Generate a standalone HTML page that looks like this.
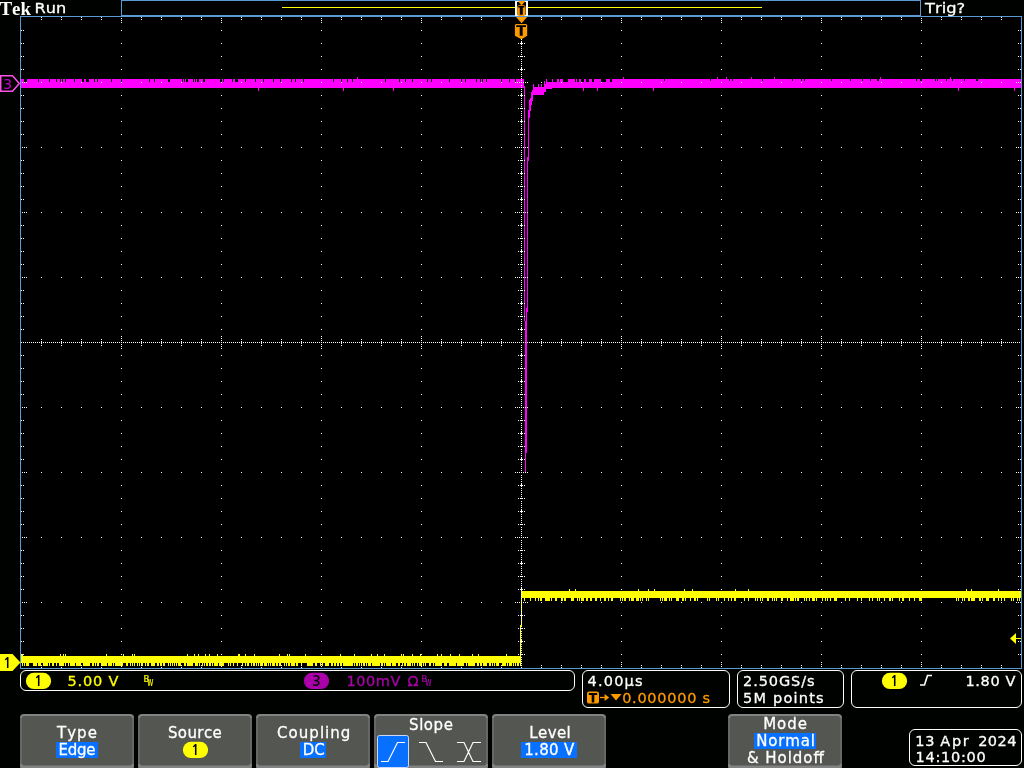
<!DOCTYPE html>
<html lang="en"><head><meta charset="utf-8"><title>Tek scope</title>
<style>html,body{margin:0;padding:0;background:#000200;overflow:hidden}svg{display:block;position:absolute;left:0;top:0;will-change:transform}text{font-family:"DejaVu Sans","Liberation Sans",sans-serif;font-size:15px;font-kerning:none;color:#fff;fill:currentColor;stroke:currentColor;stroke-width:0.3px}.r{font-size:14.5px}.b{font-family:"NanumGothic","Liberation Sans",sans-serif;font-weight:bold;font-size:14.5px;stroke-width:0}.tek{font-family:"Liberation Serif","DejaVu Serif",serif;font-weight:bold;font-size:19px;stroke-width:0}.t{font-size:14.5px}.y{color:#ffff00}.m{color:#aa00aa}.o{color:#ff9900}.k{color:#000}.c{text-anchor:middle}</style></head><body>
<svg width="1024" height="768" viewBox="0 0 1024 768">
<rect width="1024" height="768" fill="#000200"/>
<rect x="21" y="17" width="1000" height="651" fill="#000"/>
<path d="M21 79h3v9h-3zM24 82h3v6h-3zM27 79h11v9h-11zM38 82h1v6h-1zM39 79h10v9h-10zM49 82h1v6h-1zM50 79h6v9h-6zM56 82h1v6h-1zM57 79h3v9h-3zM60 82h1v6h-1zM61 79h1v9h-1zM62 82h1v6h-1zM63 79h2v9h-2zM65 82h1v6h-1zM66 79h8v9h-8zM74 82h1v6h-1zM75 79h7v9h-7zM82 82h2v6h-2zM84 79h2v9h-2zM86 82h3v6h-3zM89 79h5v9h-5zM94 82h1v6h-1zM95 79h2v9h-2zM97 82h1v6h-1zM98 79h13v9h-13zM111 82h1v6h-1zM112 79h9v9h-9zM121 82h1v6h-1zM122 79h27v9h-27zM149 82h1v6h-1zM150 79h4v9h-4zM154 82h1v6h-1zM155 79h13v9h-13zM168 82h2v6h-2zM170 79h12v9h-12zM182 82h1v6h-1zM183 79h1v9h-1zM184 82h1v6h-1zM185 79h1v9h-1zM186 82h2v6h-2zM188 79h5v9h-5zM193 82h1v6h-1zM194 79h1v9h-1zM195 82h1v6h-1zM196 79h1v9h-1zM197 82h2v6h-2zM199 79h4v9h-4zM203 82h2v6h-2zM205 79h15v9h-15zM220 82h2v6h-2zM222 79h1v9h-1zM223 82h1v6h-1zM224 79h8v9h-8zM232 82h1v6h-1zM233 79h2v9h-2zM235 82h3v6h-3zM238 79h7v9h-7zM245 82h1v6h-1zM246 79h9v9h-9zM255 82h1v6h-1zM256 79h2v9h-2zM258 79h1v12h-1zM259 79h4v9h-4zM263 82h1v6h-1zM264 79h9v9h-9zM273 82h1v6h-1zM274 79h6v9h-6zM280 82h1v6h-1zM281 79h10v9h-10zM291 82h1v6h-1zM292 79h3v9h-3zM295 82h1v6h-1zM296 79h7v9h-7zM303 82h1v6h-1zM304 79h29v9h-29zM333 82h1v6h-1zM334 79h7v9h-7zM341 82h1v6h-1zM342 79h1v9h-1zM343 79h1v12h-1zM344 79h3v9h-3zM347 82h1v6h-1zM348 79h4v9h-4zM352 82h1v6h-1zM353 79h4v9h-4zM357 77h1v11h-1zM358 79h27v9h-27zM385 82h1v6h-1zM386 79h7v9h-7zM393 79h1v12h-1zM394 79h5v9h-5zM399 82h1v6h-1zM400 79h5v9h-5zM405 82h1v6h-1zM406 79h6v9h-6zM412 82h1v6h-1zM413 79h14v9h-14zM427 82h1v6h-1zM428 79h3v9h-3zM431 82h1v6h-1zM432 79h17v9h-17zM449 82h1v6h-1zM450 79h11v9h-11zM461 82h1v6h-1zM462 79h3v9h-3zM465 82h1v6h-1zM466 79h10v9h-10zM476 82h1v6h-1zM477 79h3v9h-3zM480 82h1v6h-1zM481 79h1v9h-1zM482 82h1v6h-1zM483 79h3v9h-3zM486 82h1v6h-1zM487 79h14v9h-14zM501 82h1v6h-1zM502 79h7v9h-7zM509 82h1v6h-1zM510 79h5v9h-5zM515 82h1v6h-1zM516 79h8v9h-8zM524 86h1v235h-1zM525 321h1v152h-1zM526 308h1v145h-1zM527 157h1v155h-1zM528 110h1v51h-1zM529 100h1v18h-1zM530 98h1v13h-1zM531 92h1v13h-1zM532 90h1v11h-1zM533 84h1v11h-1zM534 87h4v8h-4zM538 84h1v11h-1zM539 87h2v8h-2zM541 84h1v11h-1zM542 87h2v8h-2zM544 81h1v11h-1zM545 84h1v8h-1zM546 79h1v10h-1zM547 82h5v7h-5zM552 79h1v9h-1zM553 82h4v6h-4zM557 79h2v9h-2zM559 82h1v6h-1zM560 79h3v9h-3zM563 82h5v6h-5zM568 79h7v9h-7zM575 82h1v6h-1zM576 79h1v9h-1zM577 82h2v6h-2zM579 79h2v9h-2zM581 82h2v6h-2zM583 82h1v9h-1zM584 79h2v9h-2zM586 82h3v6h-3zM589 79h3v9h-3zM592 82h2v6h-2zM594 79h3v9h-3zM597 79h1v12h-1zM598 79h3v9h-3zM601 82h5v6h-5zM606 79h4v9h-4zM610 82h2v6h-2zM612 79h11v9h-11zM623 77h1v11h-1zM624 79h29v9h-29zM653 79h1v12h-1zM654 79h10v9h-10zM664 81h1v7h-1zM665 79h45v9h-45zM710 81h1v7h-1zM711 79h6v9h-6zM717 77h1v11h-1zM718 79h8v9h-8zM726 77h1v11h-1zM727 79h2v9h-2zM729 81h1v7h-1zM730 79h2v9h-2zM732 81h1v7h-1zM733 79h18v9h-18zM751 77h1v11h-1zM752 79h10v9h-10zM762 81h1v7h-1zM763 79h11v9h-11zM774 77h1v11h-1zM775 79h17v9h-17zM792 81h1v7h-1zM793 79h8v9h-8zM801 81h1v7h-1zM802 79h2v9h-2zM804 81h1v7h-1zM805 79h26v9h-26zM831 81h1v7h-1zM832 79h18v9h-18zM850 81h1v7h-1zM851 79h11v9h-11zM862 81h1v7h-1zM863 79h7v9h-7zM870 81h1v7h-1zM871 79h6v9h-6zM877 81h2v7h-2zM879 79h1v9h-1zM880 77h1v11h-1zM881 79h35v9h-35zM916 81h1v7h-1zM917 79h3v9h-3zM920 81h2v7h-2zM922 79h13v9h-13zM935 81h1v7h-1zM936 79h1v9h-1zM937 81h1v7h-1zM938 79h8v9h-8zM946 81h1v7h-1zM947 79h3v9h-3zM950 77h1v11h-1zM951 79h1v9h-1zM952 81h1v7h-1zM953 79h5v9h-5zM958 79h1v12h-1zM959 79h5v9h-5zM964 81h1v7h-1zM965 79h11v9h-11zM976 81h2v7h-2zM978 79h36v9h-36zM1014 79h1v12h-1zM1015 79h6v9h-6z" fill="#ff00ff" shape-rendering="crispEdges"/>
<path d="M21 654h1v9h-1zM22 654h1v12h-1zM23 656h1v7h-1zM24 656h1v10h-1zM25 656h1v7h-1zM26 656h3v10h-3zM29 656h4v7h-4zM33 656h4v10h-4zM37 656h1v7h-1zM38 656h3v10h-3zM41 656h2v7h-2zM43 656h5v10h-5zM48 656h1v7h-1zM49 656h1v10h-1zM50 656h2v7h-2zM52 656h2v10h-2zM54 656h2v7h-2zM56 656h1v10h-1zM57 656h2v7h-2zM59 656h1v10h-1zM60 654h1v12h-1zM61 656h2v10h-2zM63 654h1v12h-1zM64 656h1v7h-1zM65 654h1v12h-1zM66 656h2v7h-2zM68 656h1v10h-1zM69 656h1v7h-1zM70 656h5v10h-5zM75 656h1v7h-1zM76 656h5v10h-5zM81 656h2v7h-2zM83 656h7v10h-7zM90 656h2v7h-2zM92 656h2v10h-2zM94 656h1v7h-1zM95 656h1v10h-1zM96 656h1v7h-1zM97 656h2v10h-2zM99 656h2v7h-2zM101 656h5v10h-5zM106 654h1v12h-1zM107 656h1v7h-1zM108 656h4v10h-4zM112 656h1v7h-1zM113 656h1v10h-1zM114 656h1v7h-1zM115 656h8v10h-8zM123 654h1v9h-1zM124 656h2v7h-2zM126 656h2v10h-2zM128 656h2v7h-2zM130 656h1v10h-1zM131 656h1v7h-1zM132 654h1v12h-1zM133 656h1v7h-1zM134 654h1v12h-1zM135 656h2v7h-2zM137 656h1v10h-1zM138 656h1v7h-1zM139 656h1v10h-1zM140 656h1v7h-1zM141 656h2v10h-2zM143 656h2v7h-2zM145 656h1v10h-1zM146 656h1v7h-1zM147 656h2v10h-2zM149 656h2v7h-2zM151 656h4v10h-4zM155 656h2v7h-2zM157 656h2v10h-2zM159 656h1v7h-1zM160 656h2v10h-2zM162 656h1v7h-1zM163 656h2v10h-2zM165 656h3v7h-3zM168 656h1v10h-1zM169 656h1v7h-1zM170 656h1v10h-1zM171 656h1v7h-1zM172 656h1v10h-1zM173 656h1v7h-1zM174 656h1v10h-1zM175 656h1v7h-1zM176 656h1v10h-1zM177 656h1v7h-1zM178 656h3v10h-3zM181 656h3v7h-3zM184 656h2v10h-2zM186 656h1v7h-1zM187 654h1v12h-1zM188 656h5v10h-5zM193 656h1v7h-1zM194 654h1v9h-1zM195 656h3v10h-3zM198 654h1v9h-1zM199 656h1v10h-1zM200 656h2v7h-2zM202 656h1v10h-1zM203 656h1v7h-1zM204 656h1v10h-1zM205 654h1v9h-1zM206 656h2v10h-2zM208 656h1v7h-1zM209 654h1v12h-1zM210 656h1v10h-1zM211 656h1v7h-1zM212 656h1v10h-1zM213 656h1v7h-1zM214 656h3v10h-3zM217 654h1v12h-1zM218 656h1v7h-1zM219 656h5v10h-5zM224 656h4v7h-4zM228 656h1v10h-1zM229 656h1v7h-1zM230 656h1v10h-1zM231 656h2v7h-2zM233 656h1v10h-1zM234 656h3v7h-3zM237 656h1v10h-1zM238 654h2v9h-2zM240 656h2v7h-2zM242 656h1v10h-1zM243 656h2v7h-2zM245 654h1v12h-1zM246 656h1v7h-1zM247 656h2v10h-2zM249 656h2v7h-2zM251 656h1v10h-1zM252 656h1v7h-1zM253 656h1v10h-1zM254 654h1v12h-1zM255 656h1v7h-1zM256 656h1v10h-1zM257 656h1v7h-1zM258 656h1v10h-1zM259 656h1v7h-1zM260 656h3v10h-3zM263 656h1v7h-1zM264 656h3v10h-3zM267 656h1v7h-1zM268 656h1v10h-1zM269 656h1v7h-1zM270 656h1v10h-1zM271 656h1v7h-1zM272 656h3v10h-3zM275 656h1v7h-1zM276 656h2v10h-2zM278 656h1v7h-1zM279 654h1v12h-1zM280 656h1v10h-1zM281 656h3v7h-3zM284 656h1v10h-1zM285 656h1v7h-1zM286 656h1v10h-1zM287 654h1v9h-1zM288 656h1v10h-1zM289 654h1v12h-1zM290 656h1v7h-1zM291 656h4v10h-4zM295 656h1v7h-1zM296 656h2v10h-2zM298 656h3v7h-3zM301 656h1v10h-1zM302 656h3v7h-3zM305 654h1v9h-1zM306 656h1v7h-1zM307 656h6v10h-6zM313 656h2v7h-2zM315 656h2v10h-2zM317 656h3v7h-3zM320 656h1v10h-1zM321 656h1v7h-1zM322 656h1v10h-1zM323 656h2v7h-2zM325 656h4v10h-4zM329 656h2v7h-2zM331 656h2v10h-2zM333 656h1v7h-1zM334 656h2v10h-2zM336 656h1v7h-1zM337 656h2v10h-2zM339 656h1v7h-1zM340 654h1v12h-1zM341 656h1v10h-1zM342 656h1v7h-1zM343 656h10v10h-10zM353 656h1v7h-1zM354 654h1v12h-1zM355 656h1v7h-1zM356 656h2v10h-2zM358 656h1v7h-1zM359 656h1v10h-1zM360 656h1v7h-1zM361 656h1v10h-1zM362 656h1v7h-1zM363 656h2v10h-2zM365 656h1v7h-1zM366 656h1v10h-1zM367 656h1v7h-1zM368 656h3v10h-3zM371 654h1v9h-1zM372 656h5v10h-5zM377 654h1v12h-1zM378 656h2v10h-2zM380 656h1v7h-1zM381 656h2v10h-2zM383 656h1v7h-1zM384 654h1v12h-1zM385 656h1v7h-1zM386 656h5v10h-5zM391 656h1v7h-1zM392 656h4v10h-4zM396 656h2v7h-2zM398 656h2v10h-2zM400 656h1v7h-1zM401 654h1v9h-1zM402 656h1v10h-1zM403 654h1v9h-1zM404 656h2v10h-2zM406 656h1v7h-1zM407 656h4v10h-4zM411 656h1v7h-1zM412 654h1v12h-1zM413 656h1v7h-1zM414 656h1v10h-1zM415 656h2v7h-2zM417 656h1v10h-1zM418 656h1v7h-1zM419 656h1v10h-1zM420 654h1v12h-1zM421 656h1v10h-1zM422 656h1v7h-1zM423 656h1v10h-1zM424 656h1v7h-1zM425 656h1v10h-1zM426 656h3v7h-3zM429 656h2v10h-2zM431 656h2v7h-2zM433 656h1v10h-1zM434 656h1v7h-1zM435 656h2v10h-2zM437 654h1v12h-1zM438 656h3v10h-3zM441 654h1v12h-1zM442 656h2v7h-2zM444 656h3v10h-3zM447 656h2v7h-2zM449 656h1v10h-1zM450 654h1v12h-1zM451 656h5v10h-5zM456 656h1v7h-1zM457 656h2v10h-2zM459 654h1v12h-1zM460 656h4v10h-4zM464 656h2v7h-2zM466 656h1v10h-1zM467 656h1v7h-1zM468 656h4v10h-4zM472 654h1v12h-1zM473 656h2v10h-2zM475 656h2v7h-2zM477 656h1v10h-1zM478 654h1v12h-1zM479 656h1v7h-1zM480 656h2v10h-2zM482 656h1v7h-1zM483 656h4v10h-4zM487 656h2v7h-2zM489 656h2v10h-2zM491 656h1v7h-1zM492 656h1v10h-1zM493 656h1v7h-1zM494 656h1v10h-1zM495 656h1v7h-1zM496 656h3v10h-3zM499 656h3v7h-3zM502 656h4v10h-4zM506 654h1v9h-1zM507 656h1v10h-1zM508 656h1v7h-1zM509 656h3v10h-3zM512 656h1v7h-1zM513 656h1v10h-1zM514 656h1v7h-1zM515 656h1v10h-1zM516 656h1v7h-1zM517 656h2v10h-2zM519 656h1v7h-1zM520 625h1v41h-1zM521 591h1v35h-1zM522 591h2v7h-2zM524 591h1v10h-1zM525 591h5v7h-5zM530 591h1v10h-1zM531 591h4v7h-4zM535 591h1v10h-1zM536 591h2v7h-2zM538 591h1v10h-1zM539 591h1v7h-1zM540 591h2v10h-2zM542 591h3v7h-3zM545 591h5v10h-5zM550 591h1v7h-1zM551 591h1v10h-1zM552 591h3v7h-3zM555 591h2v10h-2zM557 591h4v7h-4zM561 591h2v10h-2zM563 591h1v7h-1zM564 591h2v10h-2zM566 591h3v7h-3zM569 589h1v9h-1zM570 591h1v7h-1zM571 591h3v10h-3zM574 591h1v7h-1zM575 589h1v9h-1zM576 591h1v7h-1zM577 591h1v10h-1zM578 591h1v7h-1zM579 591h1v10h-1zM580 591h1v7h-1zM581 591h3v10h-3zM584 591h2v7h-2zM586 591h2v10h-2zM588 591h2v7h-2zM590 591h2v10h-2zM592 591h3v7h-3zM595 591h2v10h-2zM597 591h3v7h-3zM600 591h1v10h-1zM601 591h3v7h-3zM604 591h2v10h-2zM606 591h2v7h-2zM608 591h1v10h-1zM609 591h2v7h-2zM611 591h2v10h-2zM613 591h7v7h-7zM620 591h1v10h-1zM621 591h1v7h-1zM622 591h1v10h-1zM623 591h1v7h-1zM624 591h2v10h-2zM626 591h3v7h-3zM629 591h1v10h-1zM630 591h1v7h-1zM631 591h3v10h-3zM634 591h2v7h-2zM636 591h2v10h-2zM638 589h1v12h-1zM639 591h1v7h-1zM640 591h1v10h-1zM641 591h1v7h-1zM642 591h1v10h-1zM643 591h3v7h-3zM646 591h1v10h-1zM647 591h1v7h-1zM648 589h1v12h-1zM649 591h5v7h-5zM654 589h1v9h-1zM655 591h5v7h-5zM660 591h1v10h-1zM661 591h1v7h-1zM662 591h1v10h-1zM663 591h1v7h-1zM664 591h3v10h-3zM667 591h2v7h-2zM669 591h1v10h-1zM670 591h1v7h-1zM671 591h1v10h-1zM672 591h4v7h-4zM676 591h3v10h-3zM679 591h3v7h-3zM682 591h2v10h-2zM684 589h1v9h-1zM685 591h1v10h-1zM686 591h4v7h-4zM690 591h1v10h-1zM691 591h1v7h-1zM692 589h1v9h-1zM693 591h1v7h-1zM694 591h2v10h-2zM696 591h1v7h-1zM697 591h1v10h-1zM698 591h9v7h-9zM707 591h1v10h-1zM708 591h1v7h-1zM709 591h1v10h-1zM710 591h6v7h-6zM716 591h1v10h-1zM717 591h1v7h-1zM718 591h1v10h-1zM719 591h5v7h-5zM724 591h1v10h-1zM725 591h3v7h-3zM728 591h1v10h-1zM729 591h2v7h-2zM731 591h1v10h-1zM732 591h2v7h-2zM734 591h1v10h-1zM735 589h1v12h-1zM736 591h8v7h-8zM744 591h1v10h-1zM745 591h3v7h-3zM748 589h1v12h-1zM749 591h6v7h-6zM755 591h1v10h-1zM756 591h1v7h-1zM757 591h1v10h-1zM758 591h2v7h-2zM760 591h1v10h-1zM761 591h1v7h-1zM762 591h1v10h-1zM763 591h4v7h-4zM767 591h2v10h-2zM769 591h3v7h-3zM772 591h1v10h-1zM773 591h1v7h-1zM774 591h1v10h-1zM775 591h1v7h-1zM776 591h1v10h-1zM777 591h4v7h-4zM781 591h2v10h-2zM783 591h4v7h-4zM787 591h1v10h-1zM788 591h2v7h-2zM790 591h4v10h-4zM794 591h1v7h-1zM795 591h1v10h-1zM796 591h1v7h-1zM797 591h2v10h-2zM799 591h5v7h-5zM804 591h1v10h-1zM805 591h1v7h-1zM806 591h1v10h-1zM807 591h2v7h-2zM809 591h1v10h-1zM810 591h2v7h-2zM812 591h3v10h-3zM815 591h1v7h-1zM816 591h1v10h-1zM817 591h5v7h-5zM822 591h1v10h-1zM823 591h2v7h-2zM825 591h1v10h-1zM826 591h1v7h-1zM827 591h1v10h-1zM828 591h2v7h-2zM830 591h1v10h-1zM831 591h3v7h-3zM834 591h3v10h-3zM837 591h8v7h-8zM845 591h1v10h-1zM846 591h3v7h-3zM849 591h1v10h-1zM850 591h7v7h-7zM857 591h1v10h-1zM858 591h3v7h-3zM861 591h1v10h-1zM862 591h7v7h-7zM869 591h1v10h-1zM870 591h2v7h-2zM872 591h1v10h-1zM873 591h4v7h-4zM877 591h1v10h-1zM878 591h1v7h-1zM879 591h1v10h-1zM880 591h4v7h-4zM884 591h1v10h-1zM885 591h4v7h-4zM889 591h2v10h-2zM891 591h1v7h-1zM892 591h1v10h-1zM893 591h6v7h-6zM899 591h1v10h-1zM900 591h2v7h-2zM902 591h2v10h-2zM904 591h5v7h-5zM909 591h1v10h-1zM910 591h4v7h-4zM914 591h1v10h-1zM915 591h4v7h-4zM919 591h3v10h-3zM922 591h34v7h-34zM956 591h1v10h-1zM957 591h1v7h-1zM958 591h1v10h-1zM959 591h3v7h-3zM962 591h1v10h-1zM963 591h1v7h-1zM964 591h1v10h-1zM965 591h1v7h-1zM966 589h1v9h-1zM967 591h1v7h-1zM968 591h2v10h-2zM970 591h1v7h-1zM971 589h1v12h-1zM972 591h3v10h-3zM975 591h4v7h-4zM979 591h2v10h-2zM981 591h1v7h-1zM982 591h1v10h-1zM983 591h3v7h-3zM986 591h3v10h-3zM989 591h4v7h-4zM993 591h2v10h-2zM995 591h3v7h-3zM998 589h1v12h-1zM999 591h2v7h-2zM1001 591h1v10h-1zM1002 591h2v7h-2zM1004 591h1v10h-1zM1005 591h6v7h-6zM1011 591h1v10h-1zM1012 591h1v7h-1zM1013 591h1v10h-1zM1014 591h3v7h-3zM1017 591h1v10h-1zM1018 591h1v7h-1zM1019 591h1v10h-1zM1020 591h1v7h-1z" fill="#ffff00" shape-rendering="crispEdges"/>
<g stroke="#fff" stroke-width="1" fill="none" shape-rendering="crispEdges"><path d="M41 82.5H1002" stroke-dasharray="1 19"/><path d="M22 82.5H27" stroke-dasharray="1 1"/><path d="M1016 82.5H1021" stroke-dasharray="1 1"/><path d="M41 147.5H1002" stroke-dasharray="1 19"/><path d="M22 147.5H27" stroke-dasharray="1 1"/><path d="M1016 147.5H1021" stroke-dasharray="1 1"/><path d="M41 212.5H1002" stroke-dasharray="1 19"/><path d="M22 212.5H27" stroke-dasharray="1 1"/><path d="M1016 212.5H1021" stroke-dasharray="1 1"/><path d="M41 277.5H1002" stroke-dasharray="1 19"/><path d="M22 277.5H27" stroke-dasharray="1 1"/><path d="M1016 277.5H1021" stroke-dasharray="1 1"/><path d="M41 407.5H1002" stroke-dasharray="1 19"/><path d="M22 407.5H27" stroke-dasharray="1 1"/><path d="M1016 407.5H1021" stroke-dasharray="1 1"/><path d="M41 472.5H1002" stroke-dasharray="1 19"/><path d="M22 472.5H27" stroke-dasharray="1 1"/><path d="M1016 472.5H1021" stroke-dasharray="1 1"/><path d="M41 537.5H1002" stroke-dasharray="1 19"/><path d="M22 537.5H27" stroke-dasharray="1 1"/><path d="M1016 537.5H1021" stroke-dasharray="1 1"/><path d="M41 602.5H1002" stroke-dasharray="1 19"/><path d="M22 602.5H27" stroke-dasharray="1 1"/><path d="M1016 602.5H1021" stroke-dasharray="1 1"/><path d="M121.5 30V656" stroke-dasharray="1 12"/><path d="M121.5 18V23" stroke-dasharray="1 1"/><path d="M121.5 662V667" stroke-dasharray="1 1"/><path d="M221.5 30V656" stroke-dasharray="1 12"/><path d="M221.5 18V23" stroke-dasharray="1 1"/><path d="M221.5 662V667" stroke-dasharray="1 1"/><path d="M321.5 30V656" stroke-dasharray="1 12"/><path d="M321.5 18V23" stroke-dasharray="1 1"/><path d="M321.5 662V667" stroke-dasharray="1 1"/><path d="M421.5 30V656" stroke-dasharray="1 12"/><path d="M421.5 18V23" stroke-dasharray="1 1"/><path d="M421.5 662V667" stroke-dasharray="1 1"/><path d="M621.5 30V656" stroke-dasharray="1 12"/><path d="M621.5 18V23" stroke-dasharray="1 1"/><path d="M621.5 662V667" stroke-dasharray="1 1"/><path d="M721.5 30V656" stroke-dasharray="1 12"/><path d="M721.5 18V23" stroke-dasharray="1 1"/><path d="M721.5 662V667" stroke-dasharray="1 1"/><path d="M821.5 30V656" stroke-dasharray="1 12"/><path d="M821.5 18V23" stroke-dasharray="1 1"/><path d="M821.5 662V667" stroke-dasharray="1 1"/><path d="M921.5 30V656" stroke-dasharray="1 12"/><path d="M921.5 18V23" stroke-dasharray="1 1"/><path d="M921.5 662V667" stroke-dasharray="1 1"/><path d="M41 17.5H1002" stroke-dasharray="1 19 1 19 1 19 1 39"/><path d="M41 19.5H1002" stroke-dasharray="1 19 1 19 1 19 1 39"/><path d="M41 665.5H1002" stroke-dasharray="1 19 1 19 1 19 1 39"/><path d="M41 667.5H1002" stroke-dasharray="1 19 1 19 1 19 1 39"/><path d="M21.5 30V656" stroke-dasharray="1 12 1 12 1 12 1 25"/><path d="M23.5 30V656" stroke-dasharray="1 12 1 12 1 12 1 25"/><path d="M1018.5 30V656" stroke-dasharray="1 12 1 12 1 12 1 25"/><path d="M1020.5 30V656" stroke-dasharray="1 12 1 12 1 12 1 25"/><path d="M21 342.5H1021" stroke-dasharray="1 1"/><path d="M41.5 339v1m0 1v3m0 1v1"/><path d="M61.5 339v1m0 1v3m0 1v1"/><path d="M81.5 339v1m0 1v3m0 1v1"/><path d="M101.5 339v1m0 1v3m0 1v1"/><path d="M121.5 336V349" stroke-dasharray="1 1"/><path d="M141.5 339v1m0 1v3m0 1v1"/><path d="M161.5 339v1m0 1v3m0 1v1"/><path d="M181.5 339v1m0 1v3m0 1v1"/><path d="M201.5 339v1m0 1v3m0 1v1"/><path d="M221.5 336V349" stroke-dasharray="1 1"/><path d="M241.5 339v1m0 1v3m0 1v1"/><path d="M261.5 339v1m0 1v3m0 1v1"/><path d="M281.5 339v1m0 1v3m0 1v1"/><path d="M301.5 339v1m0 1v3m0 1v1"/><path d="M321.5 336V349" stroke-dasharray="1 1"/><path d="M341.5 339v1m0 1v3m0 1v1"/><path d="M361.5 339v1m0 1v3m0 1v1"/><path d="M381.5 339v1m0 1v3m0 1v1"/><path d="M401.5 339v1m0 1v3m0 1v1"/><path d="M421.5 336V349" stroke-dasharray="1 1"/><path d="M441.5 339v1m0 1v3m0 1v1"/><path d="M461.5 339v1m0 1v3m0 1v1"/><path d="M481.5 339v1m0 1v3m0 1v1"/><path d="M501.5 339v1m0 1v3m0 1v1"/><path d="M541.5 339v1m0 1v3m0 1v1"/><path d="M561.5 339v1m0 1v3m0 1v1"/><path d="M581.5 339v1m0 1v3m0 1v1"/><path d="M601.5 339v1m0 1v3m0 1v1"/><path d="M621.5 336V349" stroke-dasharray="1 1"/><path d="M641.5 339v1m0 1v3m0 1v1"/><path d="M661.5 339v1m0 1v3m0 1v1"/><path d="M681.5 339v1m0 1v3m0 1v1"/><path d="M701.5 339v1m0 1v3m0 1v1"/><path d="M721.5 336V349" stroke-dasharray="1 1"/><path d="M741.5 339v1m0 1v3m0 1v1"/><path d="M761.5 339v1m0 1v3m0 1v1"/><path d="M781.5 339v1m0 1v3m0 1v1"/><path d="M801.5 339v1m0 1v3m0 1v1"/><path d="M821.5 336V349" stroke-dasharray="1 1"/><path d="M841.5 339v1m0 1v3m0 1v1"/><path d="M861.5 339v1m0 1v3m0 1v1"/><path d="M881.5 339v1m0 1v3m0 1v1"/><path d="M901.5 339v1m0 1v3m0 1v1"/><path d="M921.5 336V349" stroke-dasharray="1 1"/><path d="M941.5 339v1m0 1v3m0 1v1"/><path d="M961.5 339v1m0 1v3m0 1v1"/><path d="M981.5 339v1m0 1v3m0 1v1"/><path d="M1001.5 339v1m0 1v3m0 1v1"/><path d="M521.5 17V668" stroke-dasharray="1 2 1 1 1 1 1 1 1 1 1 1"/><path d="M520 30.5h3M518 30.5h1M524 30.5h1"/><path d="M520 43.5h3M521.5 42v3M518 43.5h1M524 43.5h1"/><path d="M520 56.5h3M518 56.5h1M524 56.5h1"/><path d="M520 69.5h3M521.5 68v3M518 69.5h1M524 69.5h1"/><path d="M515 82.5H528" stroke-dasharray="1 1"/><path d="M520 95.5h3M521.5 94v3M518 95.5h1M524 95.5h1"/><path d="M520 108.5h3M518 108.5h1M524 108.5h1"/><path d="M520 121.5h3M521.5 120v3M518 121.5h1M524 121.5h1"/><path d="M520 134.5h3M518 134.5h1M524 134.5h1"/><path d="M515 147.5H528" stroke-dasharray="1 1"/><path d="M520 160.5h3M518 160.5h1M524 160.5h1"/><path d="M520 173.5h3M521.5 172v3M518 173.5h1M524 173.5h1"/><path d="M520 186.5h3M518 186.5h1M524 186.5h1"/><path d="M520 199.5h3M521.5 198v3M518 199.5h1M524 199.5h1"/><path d="M515 212.5H528" stroke-dasharray="1 1"/><path d="M520 225.5h3M521.5 224v3M518 225.5h1M524 225.5h1"/><path d="M520 238.5h3M518 238.5h1M524 238.5h1"/><path d="M520 251.5h3M521.5 250v3M518 251.5h1M524 251.5h1"/><path d="M520 264.5h3M518 264.5h1M524 264.5h1"/><path d="M515 277.5H528" stroke-dasharray="1 1"/><path d="M520 290.5h3M518 290.5h1M524 290.5h1"/><path d="M520 303.5h3M521.5 302v3M518 303.5h1M524 303.5h1"/><path d="M520 316.5h3M518 316.5h1M524 316.5h1"/><path d="M520 329.5h3M521.5 328v3M518 329.5h1M524 329.5h1"/><path d="M515 342.5H528" stroke-dasharray="1 1"/><path d="M520 355.5h3M521.5 354v3M518 355.5h1M524 355.5h1"/><path d="M520 368.5h3M518 368.5h1M524 368.5h1"/><path d="M520 381.5h3M521.5 380v3M518 381.5h1M524 381.5h1"/><path d="M520 394.5h3M518 394.5h1M524 394.5h1"/><path d="M515 407.5H528" stroke-dasharray="1 1"/><path d="M520 420.5h3M518 420.5h1M524 420.5h1"/><path d="M520 433.5h3M521.5 432v3M518 433.5h1M524 433.5h1"/><path d="M520 446.5h3M518 446.5h1M524 446.5h1"/><path d="M520 459.5h3M521.5 458v3M518 459.5h1M524 459.5h1"/><path d="M515 472.5H528" stroke-dasharray="1 1"/><path d="M520 485.5h3M521.5 484v3M518 485.5h1M524 485.5h1"/><path d="M520 498.5h3M518 498.5h1M524 498.5h1"/><path d="M520 511.5h3M521.5 510v3M518 511.5h1M524 511.5h1"/><path d="M520 524.5h3M518 524.5h1M524 524.5h1"/><path d="M515 537.5H528" stroke-dasharray="1 1"/><path d="M520 550.5h3M518 550.5h1M524 550.5h1"/><path d="M520 563.5h3M521.5 562v3M518 563.5h1M524 563.5h1"/><path d="M520 576.5h3M518 576.5h1M524 576.5h1"/><path d="M520 589.5h3M521.5 588v3M518 589.5h1M524 589.5h1"/><path d="M515 602.5H528" stroke-dasharray="1 1"/><path d="M520 615.5h3M521.5 614v3M518 615.5h1M524 615.5h1"/><path d="M520 628.5h3M518 628.5h1M524 628.5h1"/><path d="M520 641.5h3M521.5 640v3M518 641.5h1M524 641.5h1"/><path d="M520 654.5h3M518 654.5h1M524 654.5h1"/></g>
<g fill="#5a9ad4" shape-rendering="crispEdges">
<rect x="20" y="16" width="1002" height="1"/><rect x="20" y="668" width="1002" height="1"/>
<rect x="20" y="16" width="1" height="653"/><rect x="1021" y="16" width="1" height="653"/>
<rect x="121" y="0" width="800" height="1"/><rect x="121" y="15" width="800" height="1"/><rect x="121" y="0" width="1" height="16"/><rect x="920" y="0" width="1" height="16"/>
</g>
<rect x="282" y="7" width="480" height="1" fill="#ffff00" shape-rendering="crispEdges"/>
<rect x="515" y="1" width="13" height="15" fill="#fff" shape-rendering="crispEdges"/>
<rect x="517" y="2" width="9" height="13" fill="#000"/>
<path d="M517.8 1h7.6l-3.8 4.6z" fill="#ff9900"/>
<path d="M517.2 6.8l1.2-1.6h6l1.2 1.6v7.4l-1.4 1.8h-5.6l-1.4-1.8z" fill="#ff9900"/>
<path d="M518.2 6h6.2v1.5h-1.6v7.3h-3v-7.3h-1.6z" fill="#000"/>
<path d="M516 17h11.2l-5.6 6.3z" fill="#ff9900"/>
<path d="M514.9 25l1.1-1.1h10.1l1.1 1.1v10.7l-5.7 3.6l-6.6-3.6z" fill="#ff9900"/>
<path d="M516.2 25.2h9.8v1.8h-3.3v8.8h-3v-8.8h-3.5z" fill="#000"/>
<path d="M0.7 75.7h11.8l6.8 7.8l-6.8 7.8h-11.8z" fill="#000" stroke="#ff50e8" stroke-width="1.5"/>
<text x="7.7" y="88.8" class="c" style="color:#c000c0;font-size:14.5px;stroke-width:0">3</text>
<path d="M0 654h12.5l8 8.5l-8 8.5h-12.5z" fill="#ffff00"/>
<text x="7.5" y="668" class="c k b">1</text>
<path d="M1010 638.5l6-5.5v11z" fill="#ffff00"/><rect x="1016" y="638" width="5" height="1" fill="#ffff00"/>
<text x="-0.50" y="15" class="tek" textLength="31.56" lengthAdjust="spacingAndGlyphs">Tek</text>
<text x="34.59" y="13" class="t" textLength="31.69" lengthAdjust="spacingAndGlyphs">Run</text>
<text x="925.08" y="13" class="t" textLength="40.10" lengthAdjust="spacingAndGlyphs">Trig?</text>
<rect x="20.5" y="670.5" width="554" height="20" rx="5.5" fill="none" stroke="#fff" stroke-width="1"/>
<rect x="582.5" y="670.5" width="147" height="37" rx="5.5" fill="none" stroke="#fff" stroke-width="1"/>
<rect x="737.5" y="670.5" width="106" height="37" rx="5.5" fill="none" stroke="#fff" stroke-width="1"/>
<rect x="851.5" y="670.5" width="170" height="37" rx="5.5" fill="none" stroke="#fff" stroke-width="1"/>
<rect x="909.5" y="729.5" width="112" height="36" rx="5.5" fill="none" stroke="#fff" stroke-width="1"/>
<rect x="25.9" y="672.8" width="25.2" height="16.3" rx="8" ry="8.15" fill="#ffff00"/>
<text x="38.5" y="686.1" class="c k b">1</text>
<text x="67.62" y="685.5" class="y r" textLength="50.69">5.00 V</text>
<text x="143.4" y="682" class="y" style="font-size:8.6px;stroke-width:0.2px">B</text><text x="147.2" y="685.7" class="y" style="font-size:8.6px;stroke-width:0.2px" textLength="6" lengthAdjust="spacingAndGlyphs">W</text>
<rect x="303.9" y="672.8" width="25.2" height="16.3" rx="8" ry="8.15" fill="#aa00aa"/>
<text x="316.5" y="686.1" class="c k b">3</text>
<text x="346.42" y="685.5" class="m r" textLength="53.89">100mV</text>
<text x="407.52" y="685.5" class="m r" textLength="16.74">Ω</text>
<text x="421.6" y="682" class="m" style="font-size:8.6px;stroke-width:0.2px">B</text><text x="425.4" y="685.7" class="m" style="font-size:8.6px;stroke-width:0.2px" textLength="6" lengthAdjust="spacingAndGlyphs">W</text>
<text x="587.48" y="685.5" class="r" textLength="55.11">4.00µs</text>
<rect x="587" y="691.4" width="12" height="12.2" rx="2.2" fill="#ff9900"/>
<path d="M588.8 693h8.4v2h-2.9v7.6h-2.6v-7.6h-2.9z" fill="#000"/>
<path d="M600 697.5h6" stroke="#ff9900" stroke-width="1.3" fill="none"/><path d="M604.6 694l4.6 3.5l-4.6 3.5z" fill="#ff9900"/>
<path d="M610.5 694h11l-5.5 6.5z" fill="#ff9900"/>
<text x="622.13" y="702.8" class="o r" textLength="87.87">0.000000 s</text>
<text x="743.02" y="685.5" class="r" textLength="71.56">2.50GS/s</text>
<text x="743.12" y="702.8" class="r" textLength="80.46">5M points</text>
<rect x="881.9" y="672.8" width="25.2" height="16.3" rx="8" ry="8.15" fill="#ffff00"/>
<text x="894.5" y="686.1" class="c k b">1</text>
<path d="M920 685h4.5l3-9.5h4.5" stroke="#fff" stroke-width="1.6" fill="none"/>
<text x="965.42" y="685.5" class="r" textLength="49.99">1.80 V</text>
<text x="915.14" y="746" class="r" textLength="19.26">13</text>
<text x="940.31" y="746" class="r" textLength="28.47">Apr</text>
<text x="978.13" y="746" class="r" textLength="38.46">2024</text>
<text x="915.42" y="762" class="r" textLength="70.41">14:10:00</text>
<rect x="20" y="714" width="114" height="56" rx="4" fill="#828282"/>
<rect x="20" y="718" width="114" height="46" fill="#676767"/>
<rect x="22" y="716" width="110" height="49.5" rx="2" fill="#545652"/>
<text x="57.09" y="738" class="" textLength="39.78">Type</text>
<rect x="56" y="742" width="42" height="16" fill="#0870ff"/>
<text x="58.43" y="755" class="" textLength="37.15">Edge</text>
<rect x="138" y="714" width="114" height="56" rx="4" fill="#828282"/>
<rect x="138" y="718" width="114" height="46" fill="#676767"/>
<rect x="140" y="716" width="110" height="49.5" rx="2" fill="#545652"/>
<text x="167.92" y="738" class="" textLength="53.91">Source</text>
<rect x="182.9" y="741.8" width="25.2" height="16.3" rx="8" ry="8.15" fill="#ffff00"/>
<text x="195.5" y="755.1" class="c k b">1</text>
<rect x="256" y="714" width="114" height="56" rx="4" fill="#828282"/>
<rect x="256" y="718" width="114" height="46" fill="#676767"/>
<rect x="258" y="716" width="110" height="49.5" rx="2" fill="#545652"/>
<text x="277.08" y="738" class="" textLength="73.27">Coupling</text>
<rect x="300" y="742" width="26" height="16" fill="#0870ff"/>
<text x="302.75" y="755" class="" textLength="21.86">DC</text>
<rect x="374" y="714" width="114" height="56" rx="4" fill="#828282"/>
<rect x="374" y="718" width="114" height="46" fill="#676767"/>
<rect x="376" y="716" width="110" height="49.5" rx="2" fill="#545652"/>
<text x="409.06" y="730" class="" textLength="43.81">Slope</text>
<rect x="377.5" y="735.5" width="31" height="32" rx="2" fill="#0870ff" stroke="#ccd8f8" stroke-width="1"/>
<path d="M381 761.5h7l9.5-19h7.5M419 742.5h7l9.5 19h7.5M457 742.5h7l9 19h8M457 761.5h7l9-19h8" stroke="#fff" stroke-width="1.2" fill="none"/>
<rect x="492" y="714" width="114" height="56" rx="4" fill="#828282"/>
<rect x="492" y="718" width="114" height="46" fill="#676767"/>
<rect x="494" y="716" width="110" height="49.5" rx="2" fill="#545652"/>
<text x="529.25" y="738" class="" textLength="41.46">Level</text>
<rect x="521" y="742" width="56" height="16" fill="#0870ff"/>
<text x="524.14" y="755" class="" textLength="50.22">1.80 V</text>
<rect x="728" y="714" width="114" height="56" rx="4" fill="#828282"/>
<rect x="728" y="718" width="114" height="46" fill="#676767"/>
<rect x="730" y="716" width="110" height="49.5" rx="2" fill="#545652"/>
<text x="763.25" y="729" class="" textLength="43.62">Mode</text>
<rect x="754" y="733" width="62" height="16" fill="#0870ff"/>
<text x="756.25" y="746" class="" textLength="58.55">Normal</text>
<text x="746.89" y="763" class="" textLength="76.83">&amp; Holdoff</text>
</svg></body></html>
